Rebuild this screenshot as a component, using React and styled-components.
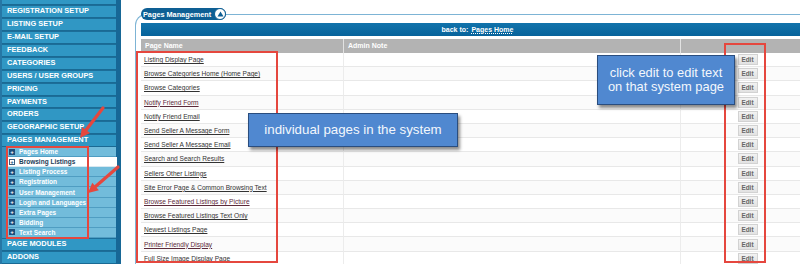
import React from 'react';
import styled, { createGlobalStyle } from 'styled-components';

const GlobalStyle = createGlobalStyle`
  html, body { margin: 0; padding: 0; background: #fff; overflow: hidden; }
  body { font-family: "Liberation Sans", Arial, sans-serif; }
`

const Page = styled.div`
  position: relative;
  display: flex;
  width: 800px;
  height: 264px;
  overflow: hidden;
  background: #fff;
`

const Sidebar = styled.div`
  width: 114px;
  flex: none;
  align-self: flex-start;
  background: #2677a5;
  padding: 0 0 0 2px;
  border-right: 5px solid #176796;
  display: flex;
  flex-direction: column;
  margin-top: -7.6px;
  height: 280px;
`

const MenuItem = styled.div`
  height: 12.9px;
  flex: none;
  box-sizing: border-box;
  border-top: 1px solid #1c6e99;
  border-bottom: 1px solid #1a6a94;
  background: #3097c4;
  color: #fff;
  font-weight: bold;
  font-size: 7.4px;
  line-height: 10.9px;
  padding-left: 5px;
  white-space: nowrap;
`

const SubMenu = styled.div`
  display: flex;
  flex-direction: column;
  background: #3a8fba;
  padding-left: 4px;
`

const SubItem = styled.div`
  height: 10.1px;
  flex: none;
  box-sizing: border-box;
  display: flex;
  align-items: center;
  gap: 4px;
  padding-left: 3px;
  margin-right: ${p => (p.$active ? '-1px' : '0')};
  background: ${p => (p.$active ? '#ffffff' : '#72bcdb')};
  border-bottom: 1px solid ${p => (p.$active ? '#d8e8f0' : '#4f9dc2')};
  color: ${p => (p.$active ? '#1c3d57' : '#fff')};
  font-weight: bold;
  font-size: 6.5px;
  white-space: nowrap;
`

const PlusBox = styled.span`
  width: 6px;
  height: 6px;
  flex: none;
  box-sizing: border-box;
  display: flex;
  align-items: center;
  justify-content: center;
  background: ${p => (p.$active ? '#fff' : '#1d4f7c')};
  border: 1px solid ${p => (p.$active ? '#3a5f80' : '#1d4f7c')};
  color: ${p => (p.$active ? '#1d4f7c' : '#fff')};
  font-size: 6px;
  line-height: 1;
  font-weight: bold;
`

const Main = styled.div`
  flex: 1;
  min-width: 0;
  padding: 14px 0 0 14px;
`

const Fieldset = styled.div`
  width: 700px;
  border-top: 1px solid #7db4d5;
  border-left: 1px solid #7db4d5;
  border-top-left-radius: 11px;
  padding: 0 0 0 5px;
  height: 300px;
`

const Legend = styled.div`
  display: flex;
  width: fit-content;
  align-items: center;
  height: 12px;
  margin-top: -7px;
  background: #0e5f94;
  border-radius: 6px;
  padding-left: 2px;
  color: #fff;
  font-weight: bold;
  font-size: 7.3px;
  gap: 3px;
`

const ToggleCircle = styled.span`
  width: 12px;
  height: 12px;
  box-sizing: border-box;
  border-radius: 50%;
  background: #fff;
  border: 1.5px solid #0e5f94;
  display: flex;
  align-items: center;
  justify-content: center;
`

const BackBar = styled.div`
  margin-top: 3px;
  height: 13px;
  width: 673px;
  background: linear-gradient(#1173ab, #07639b);
  color: #fff;
  font-weight: bold;
  font-size: 7px;
  display: flex;
  align-items: center;
  justify-content: center;
  gap: 3px;
`

const BackLink = styled.span`
  text-decoration: underline dotted;
`

const Table = styled.div`
  margin-top: 3px;
  width: 673px;
  display: grid;
  grid-template-columns: 202px 337px 134px;
`

const HeadCell = styled.div`
  height: 14px;
  background: #b3b3b3;
  border-left: ${p => (p.$first ? 'none' : '1px solid #e2e2e2')};
  color: #fff;
  font-weight: bold;
  font-size: 7px;
  line-height: 14px;
  padding-left: 4px;
`

const Cell = styled.div`
  height: 14.2px;
  box-sizing: border-box;
  border-bottom: 1px solid #e8e8e8;
  border-left: ${p => (p.$first ? 'none' : '1px solid #ececec')};
  background: ${p => (p.$odd ? '#fbfbfb' : '#fff')};
  display: flex;
  align-items: center;
  justify-content: ${p => (p.$center ? 'center' : 'flex-start')};
  padding-left: ${p => (p.$center ? '0' : '3px')};
`

const PageLink = styled.a`
  color: ${p => (p.$visited ? '#5c2a3a' : '#333')};
  font-size: 6.6px;
  text-decoration: underline;
  white-space: nowrap;
`

const EditButton = styled.span`
  width: 20px;
  height: 11px;
  box-sizing: border-box;
  background: linear-gradient(#f2f2f2, #e2e2e2);
  border: 1px solid #d2d2d2;
  color: #666;
  font-weight: bold;
  font-size: 6.4px;
  display: flex;
  align-items: center;
  justify-content: center;
`

const RedBox = styled.div`
  position: absolute;
  border: 2px solid #e5473e;
  box-sizing: border-box;
  pointer-events: none;
`

const Callout = styled.div`
  position: absolute;
  box-sizing: border-box;
  background: #5088d0;
  border: 1.5px solid #2a4d7e;
  box-shadow: 2px 3px 3px rgba(0, 0, 0, 0.45);
  color: #f3f7fc;
  font-family: "Liberation Sans", Arial, sans-serif;
  display: flex;
  align-items: center;
  justify-content: center;
  text-align: center;
  line-height: 14.5px;
`

const Overlay = styled.svg`
  position: absolute;
  left: 0;
  top: 0;
  pointer-events: none;
`

const menuTop = [
  'SITE SETUP',
  'REGISTRATION SETUP',
  'LISTING SETUP',
  'E-MAIL SETUP',
  'FEEDBACK',
  'CATEGORIES',
  'USERS / USER GROUPS',
  'PRICING',
  'PAYMENTS',
  'ORDERS',
  'GEOGRAPHIC SETUP',
  'PAGES MANAGEMENT',
]

const subMenu = [
  'Pages Home',
  'Browsing Listings',
  'Listing Process',
  'Registration',
  'User Management',
  'Login and Languages',
  'Extra Pages',
  'Bidding',
  'Text Search',
]

const pages = [
  ['Listing Display Page', false],
  ['Browse Categories Home (Home Page)', false],
  ['Browse Categories', false],
  ['Notify Friend Form', true],
  ['Notify Friend Email', false],
  ['Send Seller A Message Form', false],
  ['Send Seller A Message Email', false],
  ['Search and Search Results', false],
  ['Sellers Other Listings', false],
  ['Site Error Page & Common Browsing Text', false],
  ['Browse Featured Listings by Picture', true],
  ['Browse Featured Listings Text Only', false],
  ['Newest Listings Page', false],
  ['Printer Friendly Display', true],
  ['Full Size Image Display Page', false],
]

function Arrow({ x1, y1, x2, y2 }) {
  const dx = x2 - x1
  const dy = y2 - y1
  const len = Math.sqrt(dx * dx + dy * dy)
  const ux = dx / len
  const uy = dy / len
  const head = 10
  const half = 5
  const bx = x2 - ux * head
  const by = y2 - uy * head
  const pts = [
    `${x2},${y2}`,
    `${bx - uy * half},${by + ux * half}`,
    `${bx + uy * half},${by - ux * half}`,
  ].join(' ')
  return (
    <g>
      <line x1={x1} y1={y1} x2={bx} y2={by} stroke="#e5473e" strokeWidth="3.2" strokeLinecap="round" />
      <polygon points={pts} fill="#e5473e" />
    </g>
  )
}

export default function App() {
  return (
    <>
      <GlobalStyle />
      <Page>
        <Sidebar>
          {menuTop.map(m => (
            <MenuItem key={m}>{m}</MenuItem>
          ))}
          <SubMenu>
            {subMenu.map((s, i) => (
              <SubItem key={s} $active={i === 1}>
                <PlusBox $active={i === 1}>+</PlusBox>
                {s}
              </SubItem>
            ))}
          </SubMenu>
          <MenuItem>PAGE MODULES</MenuItem>
          <MenuItem>ADDONS</MenuItem>
        </Sidebar>

        <Main>
          <Fieldset>
            <Legend>
              Pages Management
              <ToggleCircle>
                <svg width="7" height="6" viewBox="0 0 7 6">
                  <polygon points="3.5,0.5 6.5,5.5 0.5,5.5" fill="#0e5f94" />
                </svg>
              </ToggleCircle>
            </Legend>
            <BackBar>
              back to: <BackLink>Pages Home</BackLink>
            </BackBar>
            <Table>
              <HeadCell $first>Page Name</HeadCell>
              <HeadCell>Admin Note</HeadCell>
              <HeadCell />
              {pages.map(([name, visited], i) => (
                <React.Fragment key={name}>
                  <Cell $first $odd={i % 2 === 1}>
                    <PageLink $visited={visited}>{name}</PageLink>
                  </Cell>
                  <Cell $odd={i % 2 === 1} />
                  <Cell $odd={i % 2 === 1} $center>
                    <EditButton>Edit</EditButton>
                  </Cell>
                </React.Fragment>
              ))}
            </Table>
          </Fieldset>
        </Main>

        <RedBox style={{ left: 6, top: 146, width: 83, height: 93 }} />
        <RedBox style={{ left: 136, top: 51, width: 142, height: 212 }} />
        <RedBox style={{ left: 724, top: 43, width: 42, height: 220 }} />

        <Callout style={{ left: 248, top: 113, width: 210, height: 34, fontSize: '13.3px' }}>
          individual pages in the system
        </Callout>
        <Callout style={{ left: 597, top: 55, width: 138, height: 50, fontSize: '12.9px' }}>
          click edit to edit text
          <br />
          on that system page
        </Callout>

        <Overlay width="800" height="264">
          <Arrow x1={103} y1={108} x2={80} y2={138} />
          <Arrow x1={118} y1={167} x2={88} y2={193} />
        </Overlay>
      </Page>
    </>
  )
}
